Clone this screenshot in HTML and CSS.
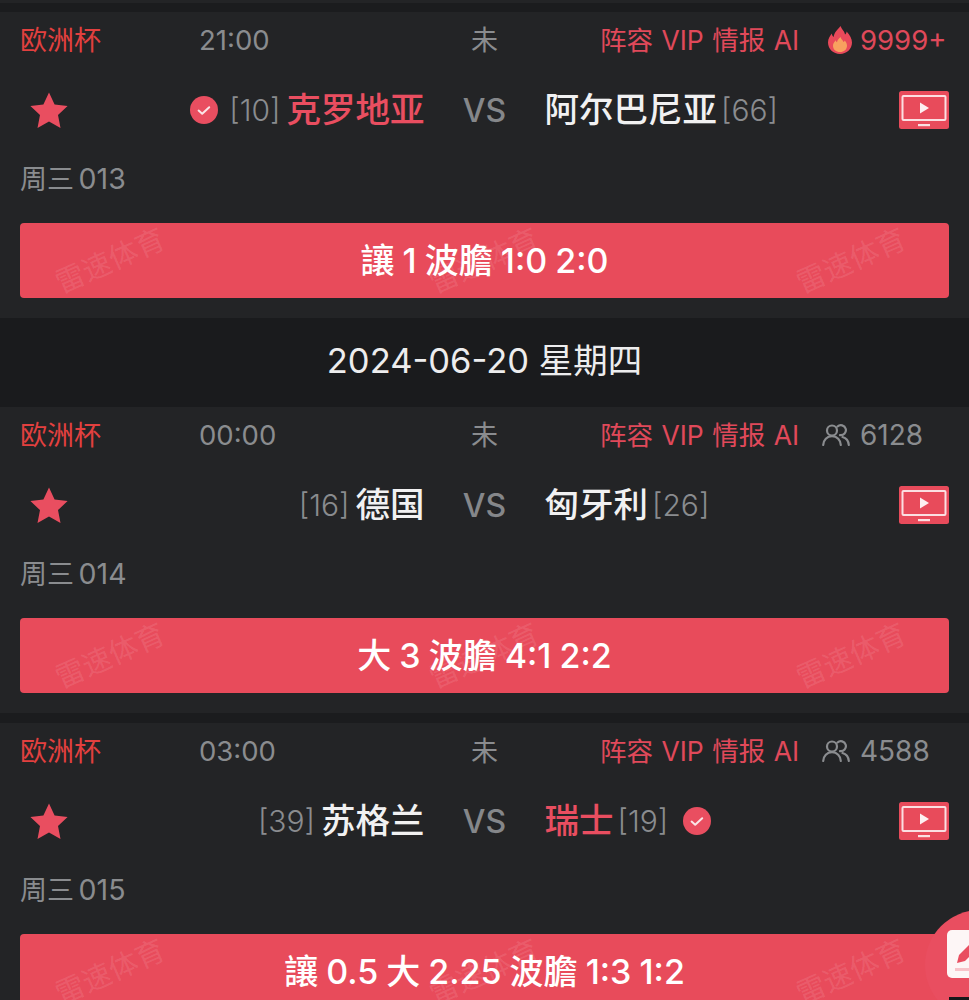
FILE: index.html
```html
<!DOCTYPE html>
<html lang="zh-CN">
<head>
  <meta charset="UTF-8">
  <meta name="viewport" content="width=device-width, initial-scale=1.0">
  <title>雷速体育</title>
  <link rel="stylesheet" href="styles.css">
</head>
<body>
  <!-- Shared icons -->
  <svg class="sprite" aria-hidden="true">
    <symbol id="i-star" viewBox="0 0 38 36">
      <path d="M19 0.5l5.6 11.9 13 1.7-9.6 9 2.5 12.9L19 29.6 7.5 36l2.5-12.9-9.6-9 13-1.7z" fill="#e94e60"/>
    </symbol>
    <symbol id="i-check" viewBox="0 0 28 28">
      <circle cx="14" cy="14" r="14" fill="#e94e60"/>
      <path d="M8.6 14.6l3.600 3.200 7-6.600" fill="none" stroke="#fbe6e8" stroke-width="2" stroke-linecap="round" stroke-linejoin="round"/>
    </symbol>
    <symbol id="i-tv" viewBox="0 0 50 38">
      <rect width="50" height="38" rx="2.500" fill="#e84b5b"/>
      <rect x="3.500" y="5" width="43" height="24" rx="1" fill="none" stroke="#fbdfe2" stroke-width="2"/>
      <path d="M21 11.500l9 5.500-9 5.500z" fill="#fdf0f1"/>
      <rect x="19" y="33" width="12" height="2.200" fill="#fbdfe2"/>
    </symbol>
    <symbol id="i-fire" viewBox="0 0 24 28">
      <path d="M12.500 0c1.500 4 4 5 4.500 8.500 1-.7 1.500-1.800 1.600-3C22 9 24 12.800 24 16.500 24 23 18.700 28 12 28S0 23 0 16.500c0-4 2-6.500 3.700-9 .3 1.600.8 2.700 2 3.500C6 6.500 9.500 4 12.500 0z" fill="#e9495a"/>
      <path d="M12.500 11c.8 2.600 2.400 3.300 3 5 .6-.3 1-.9 1.200-1.600 1.500 1.700 2.300 3.400 2.300 5.300C19 23.500 16 26 12 26s-7-2.500-7-6.300c0-2.400 1.500-4 2.700-5.500.2.900.6 1.500 1.300 2 .2-2 1.800-3.400 3.500-5.200z" fill="#f8a15f"/>
    </symbol>
    <symbol id="i-people" viewBox="0 0 28 22">
      <g fill="none" stroke="#8a8c8f" stroke-width="2.200" stroke-linecap="round">
        <circle cx="10" cy="6.500" r="5"/>
        <path d="M1.200 21c.2-5 3.800-8.800 8.800-8.800s8.600 3.800 8.800 8.800"/>
        <path d="M15.500 2.500a5 5 0 1 1 2.500 8.600"/>
        <path d="M20.500 13c3.800 1 6 4 6.300 8"/>
      </g>
    </symbol>
  </svg>

  <div class="strip"></div>

  <!-- Match 013 -->
  <div class="match">
    <div class="meta">
      <span class="league">欧洲杯</span>
      <span class="time">21:00</span>
      <span class="state">未</span>
      <span class="links">阵容 VIP 情报 AI</span>
      <span class="count hot"><svg class="fire"><use href="#i-fire"/></svg>9999+</span>
    </div>
    <div class="teams">
      <div class="side home">
        <svg class="star"><use href="#i-star"/></svg>
        <div class="team">
          <svg class="check"><use href="#i-check"/></svg>
          <span class="seed">[10]</span>
          <span class="name win">克罗地亚</span>
        </div>
      </div>
      <div class="vs">VS</div>
      <div class="side away">
        <div class="team">
          <span class="name">阿尔巴尼亚</span>
          <span class="seed">[66]</span>
        </div>
        <svg class="tv"><use href="#i-tv"/></svg>
      </div>
    </div>
    <div class="code">周三 <span class="num">013</span></div>
    <div class="tip">
      <span class="mark mark-l">雷速体育</span><span class="mark mark-c">雷速体育</span><span class="mark mark-r">雷速体育</span>
      讓 1 波膽 1:0 2:0
    </div>
  </div>

  <div class="date">2024-06-20 星期四</div>

  <!-- Match 014 -->
  <div class="match">
    <div class="meta">
      <span class="league">欧洲杯</span>
      <span class="time">00:00</span>
      <span class="state">未</span>
      <span class="links">阵容 VIP 情报 AI</span>
      <span class="count"><svg class="people"><use href="#i-people"/></svg>6128</span>
    </div>
    <div class="teams">
      <div class="side home">
        <svg class="star"><use href="#i-star"/></svg>
        <div class="team">
          <span class="seed">[16]</span>
          <span class="name">德国</span>
        </div>
      </div>
      <div class="vs">VS</div>
      <div class="side away">
        <div class="team">
          <span class="name">匈牙利</span>
          <span class="seed">[26]</span>
        </div>
        <svg class="tv"><use href="#i-tv"/></svg>
      </div>
    </div>
    <div class="code">周三 <span class="num">014</span></div>
    <div class="tip">
      <span class="mark mark-l">雷速体育</span><span class="mark mark-c">雷速体育</span><span class="mark mark-r">雷速体育</span>
      大 3 波膽 4:1 2:2
    </div>
  </div>

  <div class="gap"></div>

  <!-- Match 015 -->
  <div class="match">
    <div class="meta">
      <span class="league">欧洲杯</span>
      <span class="time">03:00</span>
      <span class="state">未</span>
      <span class="links">阵容 VIP 情报 AI</span>
      <span class="count"><svg class="people"><use href="#i-people"/></svg>4588</span>
    </div>
    <div class="teams">
      <div class="side home">
        <svg class="star"><use href="#i-star"/></svg>
        <div class="team">
          <span class="seed">[39]</span>
          <span class="name">苏格兰</span>
        </div>
      </div>
      <div class="vs">VS</div>
      <div class="side away">
        <div class="team">
          <span class="name win">瑞士</span>
          <span class="seed">[19]</span>
          <svg class="check check-after"><use href="#i-check"/></svg>
        </div>
        <svg class="tv"><use href="#i-tv"/></svg>
      </div>
    </div>
    <div class="code">周三 <span class="num">015</span></div>
    <div class="tip">
      <span class="mark mark-l">雷速体育</span><span class="mark mark-c">雷速体育</span><span class="mark mark-r">雷速体育</span>
      讓 0.5 大 2.25 波膽 1:3 1:2
    </div>
  </div>

  <!-- Floating edit button -->
  <div class="fab">
    <div class="fab-inner">
      <svg class="pencil" viewBox="0 0 22 48">
        <path d="M10 33l2-8 14-14 6 6-14 14z" fill="#e94e60"/>
        <rect x="8" y="38" width="14" height="3" fill="#f8c3c9"/>
      </svg>
    </div>
    <div class="fab-foot"></div>
  </div>
</body>
</html>
```

FILE: styles.css
```css
body {
  margin: 0;
  height: 1000px;
  overflow: hidden;
  background: #232426;
  font-family: "Inter", "Noto Sans CJK SC", sans-serif;
  color: #8a8c8f;
}

.sprite {
  display: none;
}

.strip {
  height: 9px;
  margin-top: 3px;
  background: #1b1c1e;
}

/* Match card */
.match {
  background: #232426;
  height: 306px;
  padding: 0 20px;
  box-sizing: border-box;
}

.meta {
  display: flex;
  align-items: center;
  height: 56px;
  font-size: 27px;
}

.league {
  width: 179px;
  padding-bottom: 4px;
  color: #e2403f;
  flex: none;
  box-sizing: border-box;
}

.time {
  width: 272px;
  flex: none;
  font-size: 27.500px;
}

.state {
  width: 129px;
  padding-bottom: 4px;
  flex: none;
  box-sizing: border-box;
}

.links {
  width: 199px;
  padding-bottom: 4px;
  flex: none;
  box-sizing: content-box;
  color: #e0495a;
  word-spacing: 1px;
  white-space: nowrap;
  font-size: 26.500px;
}

.count {
  display: flex;
  align-items: center;
  margin-left: 23px;
  font-size: 28px;
  white-space: nowrap;
}

.count.hot {
  margin-left: 29px;
  font-size: 27.500px;
  color: #e0495a;
}

.fire {
  width: 24px;
  height: 28px;
  margin-right: 8px;
}

.people {
  width: 28px;
  height: 22px;
  margin-right: 10px;
}

/* Teams row */
.teams {
  display: grid;
  grid-template-columns: 1fr 120px 1fr;
  align-items: center;
  height: 84px;
}

.side {
  display: flex;
  align-items: center;
  justify-content: space-between;
}

.star {
  width: 38px;
  height: 36px;
  margin-left: 10px;
}

.team {
  display: flex;
  align-items: center;
}

.name {
  font-size: 34.500px;
  font-weight: 500;
  color: #f1f1f2;
  line-height: 44px;
}

.name.win {
  color: #e94e60;
}

.seed {
  font-size: 30px;
  font-weight: 300;
  margin: 0 6px;
}

.away .seed {
  margin: 0 0 0 4px;
}

.check {
  width: 28px;
  height: 28px;
  margin-right: 5px;
}

.check-after {
  margin: 0 0 0 15px;
}

.tv {
  width: 50px;
  height: 38px;
}

.vs {
  text-align: center;
  font-size: 32px;
  font-weight: 500;
  color: #85878a;
}

.code {
  height: 71px;
  line-height: 54px;
  font-size: 27px;
  word-spacing: -3px;
}

.num {
  font-size: 28.500px;
}

/* Tip bar */
.tip {
  position: relative;
  overflow: hidden;
  height: 75px;
  line-height: 75px;
  border-radius: 4px;
  background: #e84b5b;
  color: #fff;
  font-size: 34px;
  font-weight: 500;
  word-spacing: -1px;
  text-align: center;
}

.mark {
  position: absolute;
  top: 23px;
  line-height: 29px;
  font-size: 29px;
  font-weight: 400;
  word-spacing: 0;
  color: rgba(255, 255, 255, 0.11);
  transform: rotate(-24deg);
  white-space: nowrap;
}

.mark-l {
  left: 32px;
}

.mark-c {
  left: 406px;
}

.mark-r {
  left: 773px;
}

/* Separators */
.date {
  height: 89px;
  line-height: 85px;
  background: #1a1b1d;
  color: #ededee;
  font-size: 34.500px;
  text-align: center;
}

.gap {
  height: 10px;
  background: #1b1c1e;
}

/* Floating button */
.fab {
  position: fixed;
  left: 925px;
  top: 910px;
  width: 110px;
  height: 110px;
  border-radius: 50%;
  background: #e94e60;
}

.fab-inner {
  margin: 20px 0 0 22px;
  width: 60px;
  height: 48px;
  border-radius: 5px;
  background: #fdf6f6;
  overflow: hidden;
}

.pencil {
  display: block;
  width: 22px;
  height: 48px;
  overflow: visible;
}

.fab-foot {
  margin: 19px 0 0 24px;
  height: 3px;
  background: #17181a;
}
```
